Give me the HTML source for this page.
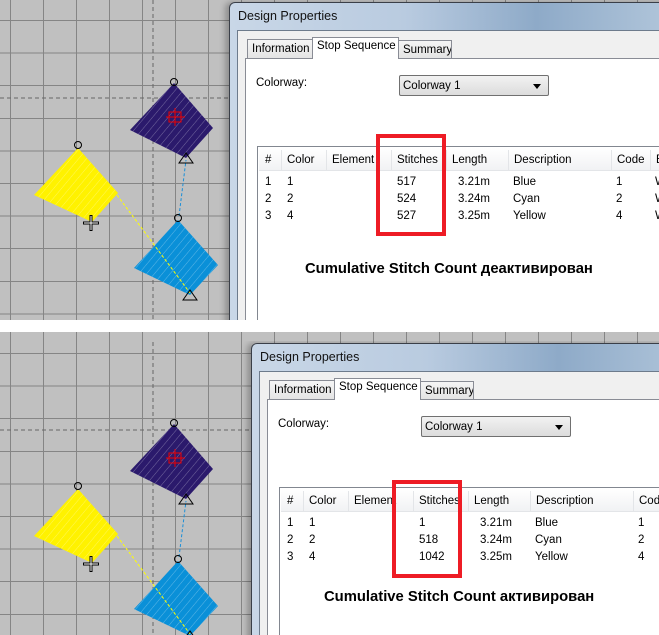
<!DOCTYPE html>
<html><head><meta charset="utf-8"><style>
*{margin:0;padding:0;box-sizing:border-box}
html,body{width:659px;height:635px;overflow:hidden}
body{background:#fff;position:relative;font-family:"Liberation Sans",sans-serif;font-size:11.5px;color:#000}
.panel{position:absolute;left:0;width:659px;overflow:hidden;background:#c0c0c0}
.scene{position:absolute;left:0;width:659px;height:330px;overflow:hidden}
.grid{position:absolute;left:0;top:0;width:659px;height:340px;
background-image:repeating-linear-gradient(to right,transparent 0,transparent 10px,#858585 10px,#858585 11px,transparent 11px,transparent 33px),
repeating-linear-gradient(to bottom,transparent 0,transparent 20px,#858585 20px,#858585 21px,transparent 21px,transparent 32.6px);}
.dlg{position:absolute;width:440px;height:340px;border:1px solid #3a3f48;border-radius:6px 0 0 0;background:linear-gradient(90deg,#c9d7e7 0%,#b9cbe0 40%,#8eaac8 70%,#b0c5da 100%);box-shadow:-4px 0 6px rgba(0,0,0,.25)}
.ttl{position:absolute;left:8px;top:6px;font-size:12.5px;color:#111;white-space:nowrap}
.client{position:absolute;left:7px;top:27px;right:0;bottom:0;background:#f0f0f0;border:1px solid #6d7b8c}
.tab{position:absolute;background:linear-gradient(#f5f5f5,#e3e3e3);border:1px solid #898c95;border-bottom:none;font-size:11.5px;padding:3px 0 0 4px;white-space:nowrap;overflow:hidden}
.tabpanel{position:absolute;left:7px;top:27px;right:0;bottom:0;background:#fff;border:1px solid #898c95}
.sel{position:absolute;width:150px;height:21px;border:1px solid #707070;border-radius:2px;background:linear-gradient(#f2f2f2,#dcdcdc);font-size:11.5px;padding:4px 0 0 3px}
.sel:after{content:"";position:absolute;right:7px;top:8px;border:4px solid transparent;border-top:5px solid #000;border-bottom:none}
.list{position:absolute;width:420px;height:300px;border:1px solid #828790;background:#fff}
.hdr{position:absolute;left:1px;top:1px;right:0;height:23px;background:linear-gradient(#fff,#f1f2f4);border-bottom:1px solid #e3e5e8}
.c{position:absolute;font-size:11.5px;white-space:nowrap}
.sep{position:absolute;top:2px;width:1px;height:21px;background:#e3e5e8}
.red{position:absolute;border:4px solid #ee1c25}
.big{position:absolute;font-weight:bold;font-size:14.8px;white-space:nowrap}
</style></head><body>

<!-- TOP PANEL -->
<div class="panel" style="top:0;height:320px">
 <div class="grid"></div>
 <div class="scene" style="top:0">
  <svg width="659" height="330" style="position:absolute;left:0;top:0">
   <defs>
    <pattern id="h" width="6" height="6" patternUnits="userSpaceOnUse" patternTransform="rotate(40)">
     <line x1="0" y1="0" x2="0" y2="6" stroke="#fff" stroke-opacity=".35" stroke-width="1"/>
    </pattern>
   </defs>
   <line x1="153" y1="0" x2="153" y2="330" stroke="#666" stroke-dasharray="4,3"/>
   <line x1="0" y1="98" x2="230" y2="98" stroke="#666" stroke-dasharray="4,3"/>
   <polygon points="174,83 213,128 186,158 130,130" fill="#2b1a6c"/>
   <polygon points="174,83 213,128 186,158 130,130" fill="url(#h)"/>
   <polygon points="78,148 118,193 92,222 34,195" fill="#fff200"/>
   <polygon points="78,148 118,193 92,222 34,195" fill="url(#h)"/>
   <polygon points="178,220 218,265 190,295 134,268" fill="#0a90d8"/>
   <polygon points="178,220 218,265 190,295 134,268" fill="url(#h)"/>
   <line x1="117" y1="195" x2="190" y2="293" stroke="#ff0" stroke-dasharray="3,2"/>
   <line x1="179" y1="216" x2="186" y2="160" stroke="#1a8fd8" stroke-dasharray="3,2"/>
   <circle cx="174" cy="82" r="3.5" fill="none" stroke="#000"/>
   <circle cx="78" cy="145" r="3.5" fill="none" stroke="#000"/>
   <circle cx="178" cy="218" r="3.5" fill="none" stroke="#000"/>
   <polygon points="186,153 179,163 193,163" fill="none" stroke="#000"/>
   <polygon points="190,290 183,300 197,300" fill="none" stroke="#000"/>
   <g stroke="#e00" fill="none"><rect x="169" y="112" width="12" height="10"/><line x1="166" y1="117" x2="185" y2="117"/><line x1="175" y1="108" x2="175" y2="126"/></g>
   <g stroke="#000" stroke-width="3"><line x1="83" y1="223" x2="99" y2="223"/><line x1="91" y1="215" x2="91" y2="231"/></g>
   <g stroke="#fff" stroke-width="1"><line x1="84" y1="223" x2="98" y2="223"/><line x1="91" y1="216" x2="91" y2="230"/></g>
  </svg>
  <div class="dlg" style="left:229px;top:2px">
   <div class="ttl">Design Properties</div>
   <div class="client">
    <div class="tab" style="left:9px;top:8px;width:66px;height:20px">Information</div>
    <div class="tab" style="left:160px;top:9px;width:54px;height:19px">Summary</div>
    <div class="tabpanel"></div>
    <div class="tab" style="left:74px;top:6px;width:87px;height:22px;background:#fff;z-index:2;padding-top:2px">Stop Sequence</div>
    <div class="c" style="left:18px;top:46px">Colorway:</div>
    <div class="sel" style="left:161px;top:44px">Colorway 1</div>
    <div class="list" style="left:19px;top:115px">
     <div class="hdr">
      <div class="c" style="left:6px;top:6px">#</div><div class="sep" style="left:22px"></div>
      <div class="c" style="left:28px;top:6px">Color</div><div class="sep" style="left:67px"></div>
      <div class="c" style="left:73px;top:6px">Element</div><div class="sep" style="left:132px"></div>
      <div class="c" style="left:138px;top:6px">Stitches</div><div class="sep" style="left:187px"></div>
      <div class="c" style="left:193px;top:6px">Length</div><div class="sep" style="left:249px"></div>
      <div class="c" style="left:255px;top:6px">Description</div><div class="sep" style="left:352px"></div>
      <div class="c" style="left:358px;top:6px">Code</div><div class="sep" style="left:391px"></div>
      <div class="c" style="left:397px;top:6px">E</div>
     </div>
     <div class="c" style="left:7px;top:27px;line-height:17px">1<br>2<br>3</div>
     <div class="c" style="left:29px;top:27px;line-height:17px">1<br>2<br>4</div>
     <div class="c" style="left:139px;top:27px;line-height:17px">517<br>524<br>527</div>
     <div class="c" style="left:200px;top:27px;line-height:17px">3.21m<br>3.24m<br>3.25m</div>
     <div class="c" style="left:255px;top:27px;line-height:17px">Blue<br>Cyan<br>Yellow</div>
     <div class="c" style="left:358px;top:27px;line-height:17px">1<br>2<br>4</div>
     <div class="c" style="left:397px;top:27px;line-height:17px">W<br>W<br>W</div>
    </div>
   </div>
  </div>
  <div class="red" style="left:376px;top:134px;width:70px;height:102px"></div>
  <div class="big" style="left:305px;top:261px">Cumulative Stitch Count деактивирован</div>
 </div>
</div>

<!-- BOTTOM PANEL -->
<div class="panel" style="top:332px;height:303px">
 <div class="grid" style="background-position:0 1px"></div>
 <div class="scene" style="top:9px">
  <svg width="659" height="330" style="position:absolute;left:0;top:0">
   <defs>
    <pattern id="h2" width="6" height="6" patternUnits="userSpaceOnUse" patternTransform="rotate(40)">
     <line x1="0" y1="0" x2="0" y2="6" stroke="#fff" stroke-opacity=".35" stroke-width="1"/>
    </pattern>
   </defs>
   <line x1="153" y1="-20" x2="153" y2="330" stroke="#666" stroke-dasharray="4,3"/>
   <line x1="0" y1="89" x2="250" y2="89" stroke="#666" stroke-dasharray="4,3"/>
   <polygon points="174,83 213,128 186,158 130,130" fill="#2b1a6c"/>
   <polygon points="174,83 213,128 186,158 130,130" fill="url(#h2)"/>
   <polygon points="78,148 118,193 92,222 34,195" fill="#fff200"/>
   <polygon points="78,148 118,193 92,222 34,195" fill="url(#h2)"/>
   <polygon points="178,220 218,265 190,295 134,268" fill="#0a90d8"/>
   <polygon points="178,220 218,265 190,295 134,268" fill="url(#h2)"/>
   <line x1="117" y1="195" x2="190" y2="293" stroke="#ff0" stroke-dasharray="3,2"/>
   <line x1="179" y1="216" x2="186" y2="160" stroke="#1a8fd8" stroke-dasharray="3,2"/>
   <circle cx="174" cy="82" r="3.5" fill="none" stroke="#000"/>
   <circle cx="78" cy="145" r="3.5" fill="none" stroke="#000"/>
   <circle cx="178" cy="218" r="3.5" fill="none" stroke="#000"/>
   <polygon points="186,153 179,163 193,163" fill="none" stroke="#000"/>
   <polygon points="190,290 183,300 197,300" fill="none" stroke="#000"/>
   <g stroke="#e00" fill="none"><rect x="169" y="112" width="12" height="10"/><line x1="166" y1="117" x2="185" y2="117"/><line x1="175" y1="108" x2="175" y2="126"/></g>
   <g stroke="#000" stroke-width="3"><line x1="83" y1="223" x2="99" y2="223"/><line x1="91" y1="215" x2="91" y2="231"/></g>
   <g stroke="#fff" stroke-width="1"><line x1="84" y1="223" x2="98" y2="223"/><line x1="91" y1="216" x2="91" y2="230"/></g>
  </svg>
  <div class="dlg" style="left:251px;top:2px">
   <div class="ttl">Design Properties</div>
   <div class="client">
    <div class="tab" style="left:9px;top:8px;width:66px;height:20px">Information</div>
    <div class="tab" style="left:160px;top:9px;width:54px;height:19px">Summary</div>
    <div class="tabpanel"></div>
    <div class="tab" style="left:74px;top:6px;width:87px;height:22px;background:#fff;z-index:2;padding-top:2px">Stop Sequence</div>
    <div class="c" style="left:18px;top:46px">Colorway:</div>
    <div class="sel" style="left:161px;top:44px">Colorway 1</div>
    <div class="list" style="left:19px;top:115px">
     <div class="hdr">
      <div class="c" style="left:6px;top:6px">#</div><div class="sep" style="left:22px"></div>
      <div class="c" style="left:28px;top:6px">Color</div><div class="sep" style="left:67px"></div>
      <div class="c" style="left:73px;top:6px">Element</div><div class="sep" style="left:132px"></div>
      <div class="c" style="left:138px;top:6px">Stitches</div><div class="sep" style="left:187px"></div>
      <div class="c" style="left:193px;top:6px">Length</div><div class="sep" style="left:249px"></div>
      <div class="c" style="left:255px;top:6px">Description</div><div class="sep" style="left:352px"></div>
      <div class="c" style="left:358px;top:6px">Code</div>
     </div>
     <div class="c" style="left:7px;top:27px;line-height:17px">1<br>2<br>3</div>
     <div class="c" style="left:29px;top:27px;line-height:17px">1<br>2<br>4</div>
     <div class="c" style="left:139px;top:27px;line-height:17px">1<br>518<br>1042</div>
     <div class="c" style="left:200px;top:27px;line-height:17px">3.21m<br>3.24m<br>3.25m</div>
     <div class="c" style="left:255px;top:27px;line-height:17px">Blue<br>Cyan<br>Yellow</div>
     <div class="c" style="left:358px;top:27px;line-height:17px">1<br>2<br>4</div>
    </div>
   </div>
  </div>
  <div class="red" style="left:392px;top:139px;width:70px;height:98px"></div>
  <div class="big" style="left:324px;top:248px">Cumulative Stitch Count активирован</div>
 </div>
</div>
</body></html>
